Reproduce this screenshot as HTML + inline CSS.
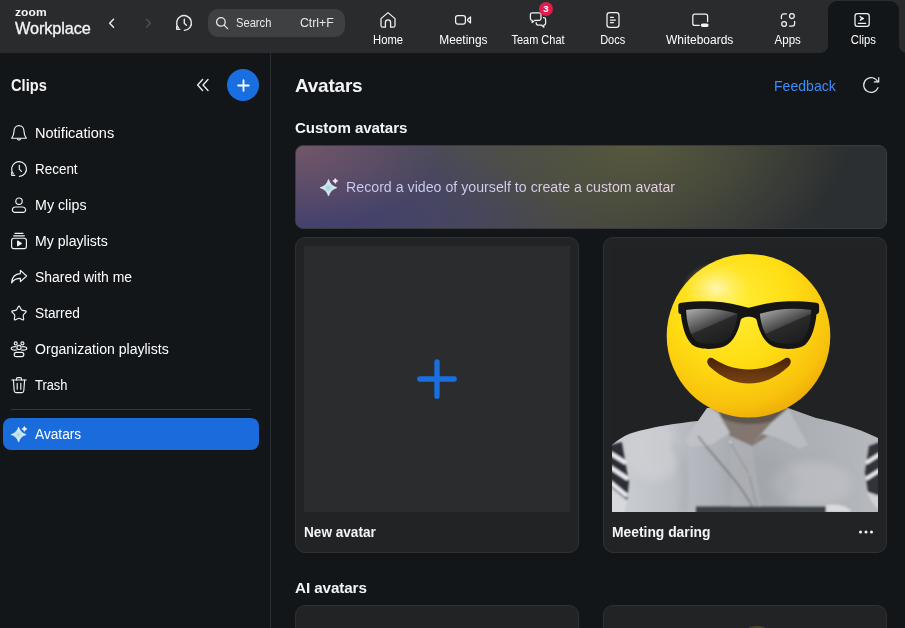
<!DOCTYPE html>
<html lang="en">
<head>
<meta charset="utf-8">
<title>Zoom Workplace - Clips - Avatars</title>
<style>
*{box-sizing:border-box;margin:0;padding:0}
html,body{width:905px;height:628px;overflow:hidden;background:#131619;color:#f2f3f5;
  font-family:"Liberation Sans","DejaVu Sans",sans-serif;font-size:14px;}
body{position:relative}
svg{display:block}
.abs{position:absolute}
.t{display:inline-block;transform-origin:0 50%;white-space:nowrap}
.t.c{transform-origin:50% 50%}
/* ---------- top bar ---------- */
#topbar{position:absolute;left:0;top:0;width:905px;height:53px;background:#2a2b2d}
#logo-zoom{position:absolute;left:15px;top:5px;font-size:11.500px;font-weight:bold;letter-spacing:0.1px;line-height:14px;color:#f5f5f5}
#logo-wp{position:absolute;left:15px;top:17.500px;font-size:16.200px;line-height:20px;color:#f5f5f5;-webkit-text-stroke:0.3px #f5f5f5;letter-spacing:-0.1px}
#search{position:absolute;left:208px;top:9px;width:137px;height:28px;border-radius:10px;background:#3f4042}
#search .s{position:absolute;left:27.500px;top:6px;font-size:13px;line-height:16px;color:#e8e8ea}
#search .k{position:absolute;left:92px;top:6px;font-size:13px;line-height:16px;color:#e8e8ea}
.tab{position:absolute;top:0;height:53px;text-align:center;font-size:12px;color:#fff}
.tab .lbl{position:absolute;left:-20px;right:-20px;top:32px;line-height:16px;text-align:center;white-space:nowrap}
.tab svg{position:absolute;left:50%;top:10px;margin-left:-10px}
#tab-clips{left:828px;width:71px;top:1px;height:52px;background:#131619;border-radius:9px 9px 0 0}
#tab-clips:before,#tab-clips:after{content:"";position:absolute;bottom:0;width:8px;height:8px}
#tab-clips:before{left:-8px;background:radial-gradient(circle at 0 0,rgba(19,22,25,0) 7.5px,#131619 8.5px)}
#tab-clips:after{right:-8px;background:radial-gradient(circle at 100% 0,rgba(19,22,25,0) 7.5px,#131619 8.5px)}
/* ---------- sidebar ---------- */
#sidebar{position:absolute;left:0;top:53px;width:271px;height:575px;border-right:1px solid #2a2d31}
#sb-title{position:absolute;left:11px;top:22px;font-size:17px;font-weight:bold;line-height:22px;color:#f5f6f7}
#plusbtn{position:absolute;left:227px;top:16px;width:32px;height:32px;border-radius:50%;background:#1a6fe0}
.item{position:absolute;left:3px;width:256px;height:32px;border-radius:8px;font-size:14px;line-height:32px;color:#fff;white-space:nowrap}
.item span{position:absolute;left:32px;top:0}
.item svg{position:absolute;left:6px;top:6px}
.item.sel{background:#1a6cdc}
#sb-div{position:absolute;left:11px;top:356px;width:240px;height:1px;background:#33363a}
/* ---------- main ---------- */
#main{position:absolute;left:271px;top:53px;width:634px;height:575px}
h1{position:absolute;left:24px;top:21px;font-size:19px;line-height:24px;font-weight:bold;color:#f2f3f5;letter-spacing:-0.2px}
#feedback{position:absolute;left:502.500px;top:22.500px;font-size:14.500px;line-height:20px;color:#3f8cf8}
h2{position:absolute;left:24px;font-size:15px;line-height:20px;font-weight:bold;color:#f2f3f5;letter-spacing:-0.1px}
#banner{position:absolute;left:24px;top:92px;width:592px;height:84px;border-radius:8px;border:1px solid #3a3c40;overflow:hidden;background:#2a2c2f}
#banner .txt{position:absolute;left:49.500px;top:32px;font-size:14px;line-height:18px;color:#e0dcf4;white-space:nowrap}
#banner .txt .t{background:linear-gradient(90deg,#cacdf4 0%,#d6cff0 50%,#eccfe8 100%);-webkit-background-clip:text;background-clip:text;color:transparent;-webkit-text-fill-color:transparent}
.card{position:absolute;width:284px;height:316px;border-radius:10px;background:#222325;border:1px solid #2f3135}
.card .thumb{position:absolute;left:8px;top:8px;width:266px;height:266px;background:#2b2c2e;overflow:hidden}
.card .name{position:absolute;left:8px;top:285px;font-size:14px;font-weight:bold;line-height:18px;color:#f5f6f7;white-space:nowrap}
</style>
</head>
<body>

<div id="topbar">
  <div id="logo-zoom"><span class="t" style="transform:scaleX(1.045)">zoom</span></div>
  <div id="logo-wp"><span class="t" style="transform:scaleX(1.007)">Workplace</span></div>

  <svg class="abs" style="left:104px;top:15px" width="16" height="16" viewBox="0 0 16 16" fill="none" stroke="#e8e8ea" stroke-width="1.5" stroke-linecap="round" stroke-linejoin="round"><path d="M9.500 4.200 L5.700 8.200 L9.500 12.200"/></svg>
  <svg class="abs" style="left:140px;top:15px" width="16" height="16" viewBox="0 0 16 16" fill="none" stroke="#4e5054" stroke-width="1.5" stroke-linecap="round" stroke-linejoin="round"><path d="M6.500 4.200 L10.300 8.200 L6.500 12.200"/></svg>
  <svg class="abs" style="left:174px;top:13px" width="20" height="20" viewBox="0 0 20 20" fill="none" stroke="#e8e8ea" stroke-width="1.4" stroke-linecap="round" stroke-linejoin="round"><path d="M4.300 14.700 A7.400 7.400 0 1 1 10.400 17.400"/><path d="M2.700 13.300 V16.300 H5.800"/><path d="M10.300 6.200 V10.200 L12.400 12.300"/></svg>

  <div id="search">
    <svg class="abs" style="left:7px;top:7.400px" width="14" height="14" viewBox="0 0 14 14" fill="none" stroke="#e8e8ea" stroke-width="1.300" stroke-linecap="round"><circle cx="5.900" cy="5.900" r="4.300"/><path d="M9.100 9.100 L12.600 12.600"/></svg>
    <span class="s t" style="transform:scaleX(0.859)">Search</span><span class="k t" style="transform:scaleX(0.943)">Ctrl+F</span>
  </div>

  <div class="tab" style="left:363px;width:50px">
    <svg width="20" height="20" viewBox="0 0 20 20" fill="none" stroke="#f2f3f5" stroke-width="1.250" stroke-linejoin="round" stroke-linecap="round"><path d="M3 8.6 L10 2.6 L17 8.6 V15.4 A1.8 1.8 0 0 1 15.2 17.2 H12.6 V12.4 A2.6 2.6 0 0 0 7.4 12.4 V17.2 H4.8 A1.8 1.8 0 0 1 3 15.4 Z"/></svg>
    <div class="lbl"><span class="t c" style="transform:scaleX(0.937)">Home</span></div>
  </div>
  <div class="tab" style="left:438px;width:50px">
    <svg width="20" height="20" viewBox="0 0 20 20" fill="none" stroke="#f2f3f5" stroke-width="1.250" stroke-linejoin="round" stroke-linecap="round"><rect x="2.600" y="5.600" width="9.800" height="8.400" rx="2.200"/><path d="M14.700 9.200 L17.500 6.900 V12.900 L14.700 10.600 Z"/></svg>
    <div class="lbl"><span class="t c" style="transform:scaleX(0.990)">Meetings</span></div>
  </div>
  <div class="tab" style="left:513px;width:50px">
    <svg width="20" height="20" viewBox="0 0 20 20" fill="none" stroke="#f2f3f5" stroke-width="1.250" stroke-linejoin="round" stroke-linecap="round"><path d="M2.4 4.6 A1.8 1.8 0 0 1 4.2 2.8 H11.2 A1.8 1.8 0 0 1 13 4.6 V8.6 A1.8 1.8 0 0 1 11.2 10.4 H6.6 L4.2 12.6 V10.4 A1.8 1.8 0 0 1 2.4 8.6 Z"/><path d="M15.4 7.6 H15.8 A1.8 1.8 0 0 1 17.6 9.4 V13.2 A1.8 1.8 0 0 1 15.8 15 V17.2 L13.4 15 H10 A1.8 1.8 0 0 1 8.2 13.2 V12.6"/></svg>
    <div class="lbl"><span class="t c" style="transform:scaleX(0.917)">Team Chat</span></div>
    <div class="abs" style="left:26px;top:2px;width:14px;height:14px;border-radius:50%;background:#de1c4d;color:#fff;font-size:9.5px;font-weight:bold;line-height:14px;text-align:center">3</div>
  </div>
  <div class="tab" style="left:588px;width:50px">
    <svg width="20" height="20" viewBox="0 0 20 20" fill="none" stroke="#f2f3f5" stroke-width="1.250" stroke-linejoin="round" stroke-linecap="round"><rect x="4" y="2.6" width="12" height="14.8" rx="2.6"/><path d="M7.400 7.300 H10.400 M7.400 10 H12.400 M7.400 12.700 H10.400"/></svg>
    <div class="lbl"><span class="t c" style="transform:scaleX(0.914)">Docs</span></div>
  </div>
  <div class="tab" style="left:675px;width:50px">
    <svg width="20" height="20" viewBox="0 0 20 20" fill="none" stroke="#f2f3f5" stroke-width="1.250" stroke-linejoin="round" stroke-linecap="round"><path d="M9.200 15.400 H4.800 A2 2 0 0 1 2.800 13.400 V6.200 A2 2 0 0 1 4.800 4.200 H15.600 A2 2 0 0 1 17.600 6.200 V11.600"/><rect x="11.400" y="14" width="6.600" height="2.400" rx="1.200" fill="#f2f3f5"/></svg>
    <div class="lbl"><span class="t c" style="transform:scaleX(0.999)">Whiteboards</span></div>
  </div>
  <div class="tab" style="left:763px;width:50px">
    <svg width="20" height="20" viewBox="0 0 20 20" fill="none" stroke="#f2f3f5" stroke-width="1.250" stroke-linejoin="round" stroke-linecap="round"><path d="M8.400 3.900 H5.800 A2.400 2.400 0 0 0 3.400 6.300 V8.600"/><circle cx="13.900" cy="6.100" r="2.400"/><circle cx="6.100" cy="13.900" r="2.400"/><path d="M11.600 16.100 H14.200 A2.400 2.400 0 0 0 16.600 13.700 V11.400"/></svg>
    <div class="lbl"><span class="t c" style="transform:scaleX(0.961)">Apps</span></div>
  </div>
  <div class="tab" id="tab-clips">
    <svg style="top:9px;margin-left:-11.200px" width="20" height="20" viewBox="0 0 20 20" fill="none" stroke="#f2f3f5" stroke-width="1.250" stroke-linejoin="round" stroke-linecap="round"><rect x="3" y="3.6" width="14.2" height="12.8" rx="2.4"/><path d="M8 6.400 L12 8.500 L8 10.600 L9.200 8.500 Z" fill="#f2f3f5" stroke-width="0.8"/><path d="M6.400 13.400 H13.600"/></svg>
    <div class="lbl" style="top:31px"><span class="t c" style="transform:scaleX(0.941)">Clips</span></div>
  </div>
</div>

<div id="sidebar">
  <div id="sb-title"><span class="t" style="transform:scaleX(0.861)">Clips</span></div>
  <svg class="abs" style="left:194px;top:23px" width="18" height="18" viewBox="0 0 18 18" fill="none" stroke="#e8e9eb" stroke-width="1.4" stroke-linecap="round" stroke-linejoin="round"><path d="M8.6 3.6 L3.6 9 L8.6 14.4"/><path d="M14 3.6 L9 9 L14 14.4"/></svg>
  <div id="plusbtn"><svg class="abs" style="left:8.500px;top:8.500px" width="15" height="15" viewBox="0 0 15 15" stroke="#fff" stroke-width="1.800" stroke-linecap="round"><path d="M7.500 2.200 V12.800 M2.200 7.500 H12.800"/></svg></div>

  <div class="item" style="top:64px"><svg width="20" height="20" viewBox="0 0 20 20" fill="none" stroke="#f2f3f5" stroke-width="1.150" stroke-linecap="round" stroke-linejoin="round"><path d="M2.700 15.200 C4.300 13.300 4.900 11.400 5 8.200 C5.100 4.900 7.200 2.600 10 2.600 C12.800 2.600 14.900 4.900 15 8.200 C15.100 11.400 15.700 13.300 17.300 15.200 Z"/><path d="M8.500 16 A1.600 1.600 0 0 0 11.500 16"/></svg><span class="t" style="transform:scaleX(1.038)">Notifications</span></div>
  <div class="item" style="top:100px"><svg width="20" height="20" viewBox="0 0 20 20" fill="none" stroke="#f2f3f5" stroke-width="1.150" stroke-linecap="round" stroke-linejoin="round"><path d="M4.300 14.700 A7.400 7.400 0 1 1 10.400 17.400"/><path d="M2.700 13.300 V16.300 H5.800"/><path d="M10.300 6.200 V10.200 L12.400 12.300"/></svg><span class="t" style="transform:scaleX(0.960)">Recent</span></div>
  <div class="item" style="top:136px"><svg width="20" height="20" viewBox="0 0 20 20" fill="none" stroke="#f2f3f5" stroke-width="1.150" stroke-linecap="round" stroke-linejoin="round"><circle cx="10" cy="6.2" r="3.2"/><path d="M3.4 15 A3 3 0 0 1 6.4 12 H13.6 A3 3 0 0 1 16.6 15 A2.4 2.4 0 0 1 14.2 17.4 H5.8 A2.4 2.4 0 0 1 3.4 15 Z"/></svg><span class="t" style="transform:scaleX(1.019)">My clips</span></div>
  <div class="item" style="top:172px"><svg width="20" height="20" viewBox="0 0 20 20" fill="none" stroke="#f2f3f5" stroke-width="1.150" stroke-linecap="round" stroke-linejoin="round"><path d="M6 2.4 H14 M4.6 4.8 H15.4"/><rect x="2.6" y="7.2" width="14.8" height="10.4" rx="2.2"/><path d="M8.6 10 L12.4 12.4 L8.6 14.8 Z" fill="#f2f3f5"/></svg><span class="t" style="transform:scaleX(1.006)">My playlists</span></div>
  <div class="item" style="top:208px"><svg width="20" height="20" viewBox="0 0 20 20" fill="none" stroke="#f2f3f5" stroke-width="1.150" stroke-linecap="round" stroke-linejoin="round"><path d="M11.4 3.4 L17.6 9 L11.4 14.6 V11.4 C7 11.4 4.4 12.8 2.6 16 C2.8 11 5.6 7 11.4 6.6 Z"/></svg><span class="t" style="transform:scaleX(0.998)">Shared with me</span></div>
  <div class="item" style="top:244px"><svg width="20" height="20" viewBox="0 0 20 20" fill="none" stroke="#f2f3f5" stroke-width="1.150" stroke-linecap="round" stroke-linejoin="round"><path d="M9.24 3.85 Q10.00 2.40 10.76 3.85 L12.07 6.35 Q12.53 7.22 13.49 7.39 L16.28 7.86 Q17.89 8.14 16.75 9.30 L14.77 11.33 Q14.09 12.03 14.23 13.00 L14.64 15.80 Q14.88 17.41 13.42 16.69 L10.88 15.43 Q10.00 15.00 9.12 15.43 L6.58 16.69 Q5.12 17.41 5.36 15.80 L5.77 13.00 Q5.91 12.03 5.23 11.33 L3.25 9.30 Q2.11 8.14 3.72 7.86 L6.51 7.39 Q7.47 7.22 7.93 6.35 Z"/></svg><span class="t" style="transform:scaleX(0.978)">Starred</span></div>
  <div class="item" style="top:280px"><svg width="20" height="20" viewBox="0 0 20 20" fill="none" stroke="#f2f3f5" stroke-width="1.150" stroke-linecap="round" stroke-linejoin="round"><circle cx="6.700" cy="4.400" r="1.500"/><circle cx="13.400" cy="4.400" r="1.500"/><circle cx="10" cy="8.400" r="2.100"/><path d="M7.400 11 C5.500 11.400 2.200 11.200 2.200 9.500 C2.200 8.200 4.400 7.600 6.800 7.700 M12.600 11 C14.500 11.400 17.800 11.200 17.800 9.500 C17.800 8.200 15.600 7.600 13.200 7.700"/><rect x="5.200" y="13.400" width="9.600" height="4.200" rx="2.100"/></svg><span class="t" style="transform:scaleX(1.005)">Organization playlists</span></div>
  <div class="item" style="top:316px"><svg width="20" height="20" viewBox="0 0 20 20" fill="none" stroke="#f2f3f5" stroke-width="1.150" stroke-linecap="round" stroke-linejoin="round"><path d="M2.8 5 H17.2"/><path d="M7.4 5 V4.2 A1.6 1.6 0 0 1 9 2.6 H11 A1.6 1.6 0 0 1 12.6 4.2 V5"/><path d="M4.4 5 L5.2 15.8 A2 2 0 0 0 7.2 17.6 H12.8 A2 2 0 0 0 14.8 15.8 L15.6 5"/><path d="M8.2 8.4 V14.2 M11.8 8.4 V14.2"/></svg><span class="t" style="transform:scaleX(0.921)">Trash</span></div>
  <div id="sb-div"></div>
  <div class="item sel" style="top:365px"><svg width="20" height="20" viewBox="0 0 20 20" stroke-width="0.600" stroke-linejoin="round"><defs><radialGradient id="spk2" gradientUnits="userSpaceOnUse" cx="9.600" cy="10.800" r="8"><stop offset="0" stop-color="#a9d6e2"/><stop offset="0.55" stop-color="#d6ecf2"/><stop offset="1" stop-color="#f4f0fa"/></radialGradient></defs><g fill="url(#spk2)" stroke="url(#spk2)"><path d="M9.60 3.10 Q11.32 8.88 17.10 10.60 Q11.32 12.32 9.60 18.10 Q7.88 12.32 2.10 10.60 Q7.88 8.88 9.60 3.10 Z"/><path d="M15.40 2.40 Q15.95 4.35 17.90 4.90 Q15.95 5.45 15.40 7.40 Q14.85 5.45 12.90 4.90 Q14.85 4.35 15.40 2.40 Z"/></g></svg><span class="t" style="transform:scaleX(0.978)">Avatars</span></div>
</div>

<div id="main">
  <h1><span class="t" style="transform:scaleX(0.997)">Avatars</span></h1>
  <div id="feedback"><span class="t" style="transform:scaleX(0.970)">Feedback</span></div>
  <svg class="abs" style="left:590px;top:22px" width="20" height="20" viewBox="0 0 20 20" fill="none" stroke="#e8e9eb" stroke-width="1.200" stroke-linecap="round" stroke-linejoin="round"><path d="M17 12.700 A7.400 7.400 0 1 1 16.700 6.700"/><path d="M17.700 2.500 V6.900 H13.300"/></svg>

  <h2 style="top:65px"><span class="t" style="transform:scaleX(1.010)">Custom avatars</span></h2>
  <div id="banner">
    <div class="abs" style="inset:0;background:
      radial-gradient(ellipse 25% 100% at 0% 0%, rgba(114,86,106,1) 0%, rgba(114,86,106,0) 100%),
      radial-gradient(ellipse 42% 120% at 4% 100%, rgba(66,64,110,1) 0%, rgba(66,64,110,0) 100%),
      radial-gradient(ellipse 36% 165% at 58% -12%, rgba(90,92,62,0.9) 0%, rgba(90,92,62,0.48) 50%, rgba(90,92,62,0) 100%),
      linear-gradient(90deg,#4c4862 0%,#4a4a54 28%,#3e403e 55%,#303335 78%,#2c2f31 90%)"></div>
    <svg class="abs" style="left:22px;top:30px" width="22" height="22" viewBox="0 0 22 22" stroke-width="0.7" stroke-linejoin="round"><defs><radialGradient id="spk" gradientUnits="userSpaceOnUse" cx="10.500" cy="12" r="9"><stop offset="0" stop-color="#9ed2da"/><stop offset="0.55" stop-color="#d4ecef"/><stop offset="1" stop-color="#f6e8f6"/></radialGradient></defs><g fill="url(#spk)" stroke="url(#spk)"><path d="M10.50 3.40 Q12.33 9.87 18.80 11.70 Q12.33 13.53 10.50 20.00 Q8.67 13.53 2.20 11.70 Q8.67 9.87 10.50 3.40 Z"/><path d="M17.30 2.40 Q17.85 4.35 19.80 4.90 Q17.85 5.45 17.30 7.40 Q16.75 5.45 14.80 4.90 Q16.75 4.35 17.30 2.40 Z"/></g></svg>
    <div class="txt"><span class="t" style="transform:scaleX(1.014)">Record a video of yourself to create a custom avatar</span></div>
  </div>

  <div class="card" style="left:24px;top:184px">
    <div class="thumb">
      <svg class="abs" style="left:112px;top:112px" width="42" height="42" viewBox="0 0 42 42" stroke="#1a6fe0" stroke-width="5.300" stroke-linecap="round"><path d="M21 3.800 V38.200 M3.800 21 H38.200"/></svg>
    </div>
    <div class="name"><span class="t" style="transform:scaleX(0.971)">New avatar</span></div>
  </div>

  <div class="card" style="left:332px;top:184px">
    <div class="thumb" style="background:#202224">
      <svg width="266" height="266" viewBox="0 0 266 266">
        <defs>
          <radialGradient id="face" cx="0.40" cy="0.30" r="0.78">
            <stop offset="0" stop-color="#ffee3a"/><stop offset="0.45" stop-color="#ffde14"/><stop offset="0.8" stop-color="#f8c20c"/><stop offset="1" stop-color="#e9a208"/>
          </radialGradient>
          <radialGradient id="shine" cx="0.5" cy="0.5" r="0.5">
            <stop offset="0" stop-color="#fffbe0" stop-opacity="0.75"/><stop offset="1" stop-color="#fff27a" stop-opacity="0"/>
          </radialGradient>
          <linearGradient id="lensL" x1="0.1" y1="0" x2="0.75" y2="1">
            <stop offset="0" stop-color="#a8a8a8"/><stop offset="0.32" stop-color="#6a6a6a"/><stop offset="0.5" stop-color="#474747"/><stop offset="0.52" stop-color="#2a2a2a"/><stop offset="1" stop-color="#1c1c1c"/>
          </linearGradient>
          <linearGradient id="shirt" x1="0" y1="0" x2="1" y2="0">
            <stop offset="0" stop-color="#cdd0d4"/><stop offset="0.24" stop-color="#bcbfc5"/><stop offset="0.5" stop-color="#a6a9af"/><stop offset="0.8" stop-color="#aeb1b6"/><stop offset="1" stop-color="#b6b9be"/>
          </linearGradient>
          <linearGradient id="mouth" x1="0" y1="0" x2="0" y2="1">
            <stop offset="0" stop-color="#4a2208"/><stop offset="1" stop-color="#7a4412"/>
          </linearGradient>
          <filter id="bl" x="-5%" y="-5%" width="110%" height="110%"><feGaussianBlur stdDeviation="0.8"/></filter>
          <filter id="bl2" x="-20%" y="-20%" width="140%" height="140%"><feGaussianBlur stdDeviation="4"/></filter>
          <clipPath id="shirtclip"><path d="M0 199 C8 192 14 189 20 187 C40 181 66 177 86 175 L95 162 L176 162 L204 172 C222 176 244 181 266 192 V266 H0 Z"/></clipPath>
        </defs>
        <!-- shirt (photo-like) -->
        <g>
          <path d="M0 199 C8 192 14 189 20 187 C40 181 66 177 86 175 L95 162 L176 162 L204 172 C222 176 244 181 266 192 V270 H-4 Z" fill="url(#shirt)"/>
          <g clip-path="url(#shirtclip)"><g filter="url(#bl)">
            <ellipse cx="42" cy="205" rx="26" ry="30" fill="#d2d4d8" opacity="0.55" filter="url(#bl2)"/>
            <ellipse cx="200" cy="238" rx="40" ry="22" fill="#c2c4c9" opacity="0.6" filter="url(#bl2)"/>
            <ellipse cx="150" cy="236" rx="34" ry="26" fill="#9a9da3" opacity="0.3" filter="url(#bl2)"/>
            <path d="M60 196 C74 214 78 240 70 268" stroke="#989ba2" stroke-width="5" fill="none" opacity="0.5" filter="url(#bl2)"/>
            <!-- neck / skin in shadow -->
            <path d="M100 160 H178 L168 182 L140 200 L118 190 Z" fill="#82766e"/>
            <path d="M104 160 H176 L170 172 C150 180 126 180 110 172 Z" fill="#5f5650"/>
            <!-- collar -->
            <path d="M95 162 L72 195 L79 201 L100 198 L118 187 L106 166 Z" fill="#bfc1c6"/>
            <path d="M176 162 L196 199 L188 203 L166 192 L150 188 L140 198 L160 176 Z" fill="#b9bcc1"/>
            <path d="M118 190 L140 200 L150 266 H120 Z" fill="#b0b3b8" opacity="0.6"/>
            <!-- cord / placket lines -->
            <path d="M86 190 C104 214 128 236 141 262" stroke="#6f737a" stroke-width="1.6" fill="none" opacity="0.8"/>
            <path d="M119 198 L137 228 L146 266" stroke="#8b8e94" stroke-width="1.4" fill="none" opacity="0.8"/>
            <circle cx="118.5" cy="196" r="2.4" fill="#c9cbd0" stroke="#8d9096" stroke-width="0.8"/>
            <circle cx="137.5" cy="228" r="2" fill="#b8a9a4"/>
            <!-- sleeve stripes -->
            <path d="M-2 199 L10 196 L17 236 L15 254 L-2 240 Z" fill="#2c2d35"/>
            <path d="M-2 207 L14 217 M-2 221 L16 233 M-2 236 L15 250" stroke="#eceef1" stroke-width="4"/>
            <path d="M-2 243 L15 256 L12 268 H-2 Z" fill="#d6d8dc"/>
            <path d="M268 196 L257 200 L253 226 L256 246 L268 252 Z" fill="#30313a"/>
            <path d="M268 208 L254 217 M268 224 L254 233" stroke="#eceef1" stroke-width="3.600"/>
            <path d="M255 246 C258 254 262 260 268 264 V250 Z" fill="#d0d2d6"/>
            <!-- bottom dark band + pocket edge -->
            <path d="M84 260.5 H214 V268 H84 Z" fill="#3b3f45"/>
            <path d="M214 259 C226 257 236 260 240 266 H214 Z" fill="#d8dadd"/>
          </g></g>
        </g>
        <!-- emoji -->
        <circle cx="136.5" cy="89.8" r="81.8" fill="url(#face)"/>
        <ellipse cx="104" cy="42" rx="34" ry="26" fill="url(#shine)"/>
        <path d="M95.5 114 C97 111 100 111.500 102 113 C124 127 150 127 172 113 C174 111.500 177 111 178.500 114 C179.500 116.500 178 119 176 121 C152 143 122 143 98 121 C96 119 94.500 116.500 95.500 114 Z" fill="url(#mouth)"/>
        <path d="M66.3 59.5 C66.3 57.6 67.5 56.9 69.5 56.7 C82 55.1 92 54.9 101.3 55.4 C114 56.100 126 58.700 136.7 61.700 C147.4 58.700 159.4 56.100 172.1 55.4 C181.4 54.9 191.4 55.1 203.9 56.700 C205.9 56.9 207.100 57.600 207.100 59.500 L207.100 65 C207.100 67 206.300 67.700 204.500 68.200 C203.300 80 200 92 193.500 98.500 C187.500 103.300 175 104 164.500 101.500 C154 99 147.500 88 144.800 74.500 C143.600 69.500 129.800 69.500 128.600 74.500 C125.900 88 119.400 99 108.900 101.500 C98.400 104 85.900 103.300 79.900 98.500 C73.400 92 70.100 80 68.900 68.200 C67.100 67.700 66.300 67 66.300 65 Z" fill="#151515"/>
        <path d="M74.100 64 C91 61.400 110 62.800 125.600 67.800 C124.200 80 120.500 90 114.500 94.600 C106 98.800 91 98.800 84.500 95.200 C77.500 89.500 74.800 77 74.100 64 Z" fill="url(#lensL)"/>
        <path d="M199.300 64 C182.400 61.400 163.400 62.800 147.800 67.800 C149.200 80 152.900 90 158.900 94.600 C167.400 98.800 182.400 98.800 188.900 95.200 C195.900 89.500 198.600 77 199.300 64 Z" fill="url(#lensL)"/>
      </svg>
    </div>
    <div class="name"><span class="t" style="transform:scaleX(0.989)">Meeting daring</span></div>
    <svg class="abs" style="left:253px;top:290px" width="18" height="8" viewBox="0 0 18 8" fill="#f2f3f5"><circle cx="3.5" cy="4" r="1.5"/><circle cx="9" cy="4" r="1.5"/><circle cx="14.5" cy="4" r="1.5"/></svg>
  </div>

  <h2 style="top:525px"><span class="t" style="transform:scaleX(1.015)">AI avatars</span></h2>
  <div class="card" style="left:24px;top:552px"></div>
  <div class="card" style="left:332px;top:552px"><div class="abs" style="left:144px;top:20px;width:18px;height:6px;border-radius:50%;background:#55552a;opacity:.7"></div></div>
</div>

</body>
</html>
